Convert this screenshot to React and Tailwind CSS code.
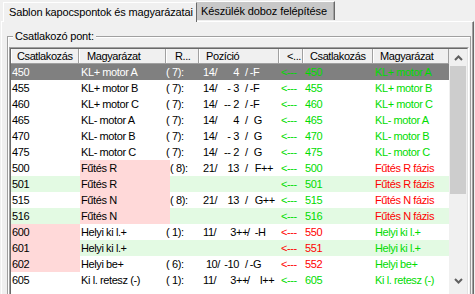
import React from "react";

const G = "text-[#00dc00]";
const R = "text-[#ff0000]";

const P = (pre, num, plus, sfx, ml) => ({ pre, num, plus, sfx, ml });

const rows = [
  { c: "450", m: "KL+ motor A", r: "( 7):", p: P("14/", "4", "", "-F", "ml-[2px]"), a: G, n: "450", nc: G, x: "KL+ motor A", xc: G, sel: true },
  { c: "455", m: "KL+ motor B", r: "( 7):", p: P("14/", "- 3", "", "-F", "ml-[2px]"), a: G, n: "455", nc: G, x: "KL+ motor B", xc: G },
  { c: "460", m: "KL+ motor C", r: "( 7):", p: P("14/", "-- 2", "", "-F", "ml-[2px]"), a: G, n: "460", nc: G, x: "KL+ motor C", xc: G },
  { c: "465", m: "KL- motor A", r: "( 7):", p: P("14/", "4", "", "G", "ml-[6px]"), a: G, n: "465", nc: G, x: "KL- motor A", xc: G },
  { c: "470", m: "KL- motor B", r: "( 7):", p: P("14/", "- 3", "", "G", "ml-[6px]"), a: G, n: "470", nc: G, x: "KL- motor B", xc: G },
  { c: "475", m: "KL- motor C", r: "( 7):", p: P("14/", "-- 2", "", "G", "ml-[6px]"), a: G, n: "475", nc: G, x: "KL- motor C", xc: G },
  { c: "500", m: "Fűtés R", mp: true, r: "( 8):", p: P("21/", "13", "", "F++", "ml-[7px]"), a: G, n: "500", nc: G, x: "Fűtés R fázis", xc: R },
  { c: "501", m: "Fűtés R", mp: true, r: "", p: null, a: G, n: "501", nc: G, x: "Fűtés R fázis", xc: R, lg: true },
  { c: "515", m: "Fűtés N", mp: true, r: "( 8):", p: P("21/", "13", "", "G++", "ml-[7px]"), a: G, n: "515", nc: G, x: "Fűtés N fázis", xc: R },
  { c: "516", m: "Fűtés N", mp: true, r: "", p: null, a: G, n: "516", nc: G, x: "Fűtés N fázis", xc: R, lg: true },
  { c: "600", cp: true, m: "Helyi ki l.+", r: "( 1):", p: P("11/", "3", "++", "-H", "ml-[5px]"), a: R, n: "550", nc: R, x: "Helyi ki l.+", xc: G },
  { c: "601", cp: true, m: "Helyi ki l.+", r: "", p: null, a: R, n: "551", nc: R, x: "Helyi ki l.+", xc: G, lg: true },
  { c: "602", cp: true, m: "Helyi be+", r: "( 6):", p: P("10/", "-10", "", "-G", "ml-[2px]"), a: R, n: "552", nc: R, x: "Helyi be+", xc: G, tight: true },
  { c: "605", m: "Ki l. retesz (-)", r: "( 1):", p: P("11/", "3", "++", "I++", "ml-[10px]"), a: G, n: "605", nc: G, x: "Ki l. retesz (-)", xc: G },
];

function Hdr({ w, pl, children }) {
  return (
    <div
      className={`${w} ${pl} h-full flex items-center border-r border-r-[#a0a0a0] shadow-[inset_1px_0_0_#ffffff] whitespace-nowrap overflow-hidden`}
    >
      {children}
    </div>
  );
}

function Pos({ p, tight }) {
  if (!p) return null;
  return (
    <div className="flex items-center whitespace-nowrap">
      <span className={tight ? "w-[17px] text-right" : "w-[19px]"}>{p.pre}</span>
      {p.plus ? (
        <>
          <span className="w-[14px] text-right">{p.num}</span>
          <span className="w-[11px]">{p.plus}</span>
        </>
      ) : (
        <span className={`${tight ? "w-[19px]" : "w-[17px]"} text-right mr-[6px]`}>{p.num}</span>
      )}
      <span>/</span>
      <span className={p.ml}>{p.sfx}</span>
    </div>
  );
}

export default function App() {
  return (
    <div
      className="w-[475px] h-[294px] bg-[#f0f0f0] overflow-hidden flex flex-col text-[11px] text-black"
      style={{ fontFamily: '"Liberation Sans", Arial, sans-serif' }}
    >
      {/* Tabs */}
      <div className="h-[21px] flex items-end pl-[3px] shrink-0">
        <div className="relative z-10 -mb-px w-[194px] h-[20px] bg-[#f0f0f0] border-l border-t border-white border-r border-r-[#696969] flex items-center pl-[5px] tracking-[-0.15px] whitespace-nowrap">
          Sablon kapocspontok és magyarázatai
        </div>
        <div className="w-[138px] h-[19px] mb-[1px] bg-[#c8c8c8] border-t border-white border-r border-r-[#696969] shadow-[inset_-1px_0_0_#a0a0a0] flex items-center pl-[4px] tracking-[-0.1px] whitespace-nowrap">
          Készülék doboz felépítése
        </div>
      </div>

      {/* Panel */}
      <div className="flex-1 ml-[1px] mr-[1px] border-l border-t border-white border-r border-r-[#696969] shadow-[inset_-1px_0_0_#a0a0a0] pl-[5px] pr-[2px] pt-[14px]">
        {/* Group box */}
        <div className="relative h-[300px] border border-[#a0a0a0] shadow-[inset_1px_1px_0_#ffffff] pl-[1px] pr-[1px] pt-[10px]">
          <div className="absolute left-[5px] -top-[8px] bg-[#f0f0f0] px-[2px] leading-[14px] tracking-[-0.2px] whitespace-nowrap">
            Csatlakozó pont:
          </div>

          {/* Grid */}
          <div className="border-l border-t border-[#a0a0a0] border-r border-b border-r-white border-b-white">
            <div className="border-l border-t border-[#696969] border-r border-b border-r-[#e3e3e3] border-b-[#e3e3e3] bg-white flex tracking-[-0.4px]">
              <div className="w-[438px] flex flex-col">
                {/* header */}
                <div className="h-[15px] flex bg-[#f0f0f0] border-b border-b-[#a0a0a0]">
                  <Hdr w="w-[68px]" pl="pl-[6px]">Csatlakozás</Hdr>
                  <Hdr w="w-[87px]" pl="pl-[8px]">Magyarázat</Hdr>
                  <Hdr w="w-[33px]" pl="pl-[9px]">R...</Hdr>
                  <Hdr w="w-[80px]" pl="pl-[7px]">Pozíció</Hdr>
                  <Hdr w="w-[24px]" pl="pl-[8px]">&lt;...</Hdr>
                  <Hdr w="w-[70px]" pl="pl-[7px]">Csatlakozás</Hdr>
                  <Hdr w="w-[76px]" pl="pl-[7px]">Magyarázat</Hdr>
                </div>
                {rows.map((r, i) => {
                  const rowBg = r.sel ? "bg-[#808080]" : r.lg ? "bg-[#e3fae3]" : "bg-white";
                  const lt = r.sel ? "text-white" : "text-black";
                  return (
                    <div key={i} className={`h-[16px] flex items-center whitespace-pre ${rowBg}`}>
                      <div className={`w-[69px] h-full flex items-center pl-[1px] ${lt} ${r.cp ? "bg-[#ffd9d9]" : ""}`}>{r.c}</div>
                      <div className={`w-[86px] h-full flex items-center pl-[1px] ${lt} ${r.mp ? "bg-[#ffd9d9]" : ""}`}>{r.m}</div>
                      <div className={`w-[34px] h-full flex items-center ${lt} ${r.mp ? "border-l-4 border-l-[#ffd9d9]" : ""}`}>{r.r}</div>
                      <div className={`w-[79px] h-full flex items-center pl-[3px] ${lt}`}><Pos p={r.p} tight={r.tight} /></div>
                      <div className={`w-[24px] h-full flex items-center pl-[2px] ${r.a}`}>{"<---"}</div>
                      <div className={`w-[70px] h-full flex items-center pl-[2px] ${r.nc}`}>{r.n}</div>
                      <div className={`w-[76px] h-full flex items-center pl-[2px] ${r.xc}`}>{r.x}</div>
                    </div>
                  );
                })}
                <div className="h-[10px]" />
              </div>
              {/* scrollbar */}
              <div className="w-[18px] flex flex-col bg-[#f0f0f0]">
                <div className="h-[17px] flex items-center justify-center">
                  <svg width="9" height="6" viewBox="0 0 9 6">
                    <path d="M1 5 L4.5 1.5 L8 5" fill="none" stroke="#606060" strokeWidth="2" />
                  </svg>
                </div>
                <div className="h-[128px] mx-[1px] bg-[#cdcdcd]" />
                <div className="h-[78px]" />
                <div className="h-[17px] flex items-center justify-center">
                  <svg width="9" height="6" viewBox="0 0 9 6">
                    <path d="M1 1 L4.5 4.5 L8 1" fill="none" stroke="#606060" strokeWidth="2" />
                  </svg>
                </div>
              </div>
            </div>
          </div>
        </div>
      </div>
    </div>
  );
}
